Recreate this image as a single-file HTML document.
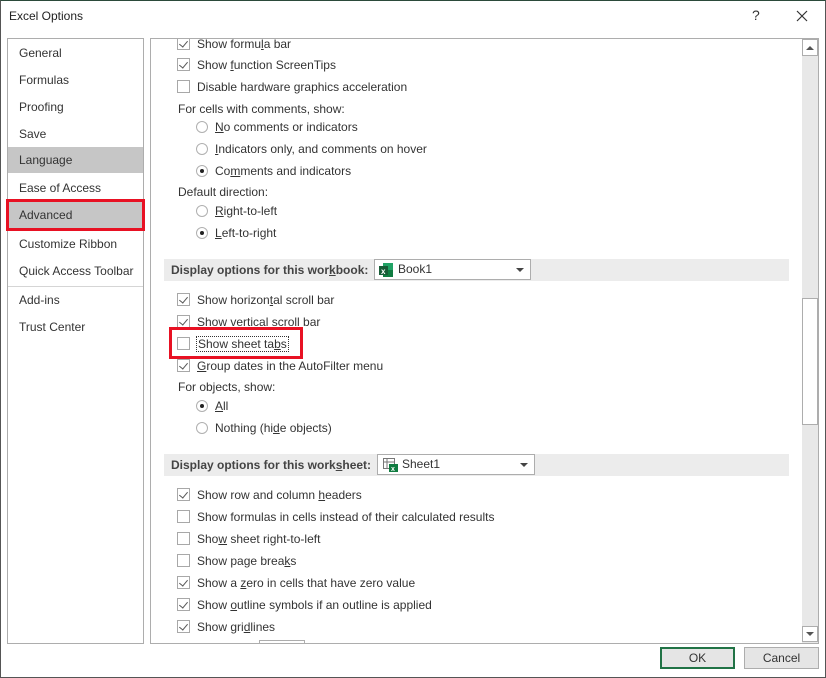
<!DOCTYPE html>
<html><head><meta charset="utf-8"><style>
*{margin:0;padding:0;box-sizing:border-box}
body{width:826px;height:678px;background:#fff;font-family:"Liberation Sans",sans-serif;font-size:12px;color:#333;position:relative;overflow:hidden}
.a{position:absolute;white-space:nowrap}
.win{position:absolute;left:0;top:0;width:826px;height:678px;border:1px solid #555;border-top-color:#2b4a3a}
.nav{position:absolute;left:7px;top:38px;width:137px;height:606px;border:1px solid #adadad}
.ni{position:absolute;left:0;width:135px;height:26px;line-height:26px;padding-left:11px;color:#333}
.main{position:absolute;left:150px;top:38px;width:669px;height:606px;border:1px solid #adadad;overflow:hidden}
.cb{position:absolute;width:13px;height:13px;border:1px solid #a8a8a8;background:#fff}
.cb.c::after{content:"";position:absolute;left:3px;top:1px;width:4px;height:7px;border-right:1px solid #555;border-bottom:1px solid #555;transform:rotate(40deg)}
.rb{position:absolute;width:12px;height:12px;border:1px solid #b0b0b0;border-radius:50%;background:#fff}
.rb.c::after{content:"";position:absolute;left:3px;top:3px;width:4px;height:4px;border-radius:50%;background:#222}
.t{position:absolute;white-space:nowrap;line-height:14px}
.hd{position:absolute;left:13px;width:625px;height:22px;background:#ececec;font-weight:bold;color:#444;line-height:22px;padding-left:7px}
.dd{position:absolute;height:21px;border:1px solid #adadad;background:#fff;line-height:19px;font-weight:normal;color:#333}
.dd .ar{position:absolute;right:6px;top:8px;border-left:4px solid transparent;border-right:4px solid transparent;border-top:4px solid #444}
.sb{position:absolute;left:651px;top:0;width:16px;height:604px;background:#e8e8e8}
.btn{position:absolute;top:647px;width:75px;height:22px;border:1px solid #adadad;background:#e5e5e5;text-align:center;line-height:20px;color:#333}
u{text-decoration:underline}
</style></head><body>
<div class="win"></div>
<div class="a" style="left:9px;top:9px;font-size:12px;color:#222">Excel Options</div>
<div class="a" style="left:752px;top:7px;font-size:14px;color:#333">?</div>
<svg class="a" style="left:796px;top:10px" width="12" height="12"><path d="M1 1L11 11M11 1L1 11" stroke="#333" stroke-width="1.2"/></svg>

<div class="nav">
<div class="ni" style="top:1px">General</div>
<div class="ni" style="top:28px">Formulas</div>
<div class="ni" style="top:55px">Proofing</div>
<div class="ni" style="top:82px">Save</div>
<div class="ni" style="top:108px;background:#c6c6c6">Language</div>
<div class="ni" style="top:136px">Ease of Access</div>
<div class="ni" style="top:163px;background:#c6c6c6">Advanced</div>
<div class="ni" style="top:192px">Customize Ribbon</div>
<div class="ni" style="top:219px">Quick Access Toolbar</div>
<div style="position:absolute;left:0;top:247px;width:135px;height:1px;background:#d5d5d5"></div>
<div class="ni" style="top:248px">Add-ins</div>
<div class="ni" style="top:275px">Trust Center</div>
</div>
<div class="a" style="left:6px;top:199px;width:139px;height:32px;border:3px solid #e81123"></div>

<div class="main">
<div class="cb c" style="left:26px;top:-2px"></div><div class="t" style="left:46px;top:-2px">Show formu<u>l</u>a bar</div>
<div class="cb c" style="left:26px;top:19px"></div><div class="t" style="left:46px;top:19px">Show <u>f</u>unction ScreenTips</div>
<div class="cb" style="left:26px;top:41px"></div><div class="t" style="left:46px;top:41px">Disable hardware <u>g</u>raphics acceleration</div>
<div class="t" style="left:27px;top:63px">For cells with comments, show:</div>
<div class="rb" style="left:45px;top:82px"></div><div class="t" style="left:64px;top:81px"><u>N</u>o comments or indicators</div>
<div class="rb" style="left:45px;top:104px"></div><div class="t" style="left:64px;top:103px"><u>I</u>ndicators only, and comments on hover</div>
<div class="rb c" style="left:45px;top:126px"></div><div class="t" style="left:64px;top:125px">Co<u>m</u>ments and indicators</div>
<div class="t" style="left:27px;top:146px">Default direction:</div>
<div class="rb" style="left:45px;top:166px"></div><div class="t" style="left:64px;top:165px"><u>R</u>ight-to-left</div>
<div class="rb c" style="left:45px;top:188px"></div><div class="t" style="left:64px;top:187px"><u>L</u>eft-to-right</div>

<div class="hd" style="top:220px">Display options for this wor<u>k</u>book:
<div class="dd" style="left:210px;top:0;width:157px"><svg style="position:absolute;left:4px;top:3px" width="14" height="14"><rect x="4" y="0" width="10" height="14" fill="#21a366"/><rect x="4" y="7" width="10" height="7" fill="#107c41"/><rect x="0" y="3" width="9" height="9" fill="#185c37"/><text x="2" y="11" font-size="8" fill="#fff" font-family="Liberation Sans" font-weight="bold">x</text></svg><span style="position:absolute;left:23px">Book1</span><div class="ar"></div></div></div>

<div class="cb c" style="left:26px;top:254px"></div><div class="t" style="left:46px;top:254px">Show horizon<u>t</u>al scroll bar</div>
<div class="cb c" style="left:26px;top:276px"></div><div class="t" style="left:46px;top:276px">Show <u>v</u>ertical scroll bar</div>
<div class="cb" style="left:26px;top:298px"></div><div class="t" style="left:45px;top:297px;border:1px dotted #333;padding:0 1px">Show sheet ta<u>b</u>s</div>
<div class="cb c" style="left:26px;top:320px"></div><div class="t" style="left:46px;top:320px"><u>G</u>roup dates in the AutoFilter menu</div>
<div class="t" style="left:27px;top:341px">For objects, show:</div>
<div class="rb c" style="left:45px;top:361px"></div><div class="t" style="left:64px;top:360px"><u>A</u>ll</div>
<div class="rb" style="left:45px;top:383px"></div><div class="t" style="left:64px;top:382px">Nothing (hi<u>d</u>e objects)</div>

<div class="hd" style="top:415px">Display options for this work<u>s</u>heet:
<div class="dd" style="left:213px;top:0;width:158px"><svg style="position:absolute;left:5px;top:3px" width="15" height="14"><rect x="0.5" y="0.5" width="11" height="10" fill="none" stroke="#777"/><path d="M0 4H12M4 0V11" stroke="#777"/><rect x="6" y="6" width="9" height="8" fill="#107c41"/><text x="8" y="13" font-size="7" fill="#fff" font-family="Liberation Sans" font-weight="bold">x</text></svg><span style="position:absolute;left:24px">Sheet1</span><div class="ar"></div></div></div>

<div class="cb c" style="left:26px;top:449px"></div><div class="t" style="left:46px;top:449px">Show row and column <u>h</u>eaders</div>
<div class="cb" style="left:26px;top:471px"></div><div class="t" style="left:46px;top:471px">Show formulas in cells instead of their calculated results</div>
<div class="cb" style="left:26px;top:493px"></div><div class="t" style="left:46px;top:493px">Sho<u>w</u> sheet right-to-left</div>
<div class="cb" style="left:26px;top:515px"></div><div class="t" style="left:46px;top:515px">Show page brea<u>k</u>s</div>
<div class="cb c" style="left:26px;top:537px"></div><div class="t" style="left:46px;top:537px">Show a <u>z</u>ero in cells that have zero value</div>
<div class="cb c" style="left:26px;top:559px"></div><div class="t" style="left:46px;top:559px">Show <u>o</u>utline symbols if an outline is applied</div>
<div class="cb c" style="left:26px;top:581px"></div><div class="t" style="left:46px;top:581px">Show gri<u>d</u>lines</div>
<div style="position:absolute;left:108px;top:601px;width:46px;height:10px;border:1px solid #adadad"></div>

<div class="sb">
<div style="position:absolute;left:0;top:0;width:16px;height:17px;border:1px solid #adadad;background:#fff"><div style="position:absolute;left:3px;top:6px;border-left:4px solid transparent;border-right:4px solid transparent;border-bottom:4px solid #555"></div></div>
<div style="position:absolute;left:0;top:259px;width:16px;height:127px;border:1px solid #adadad;background:#fff"></div>
<div style="position:absolute;left:0;top:587px;width:16px;height:16px;border:1px solid #adadad;background:#fff"><div style="position:absolute;left:3px;top:5px;border-left:4px solid transparent;border-right:4px solid transparent;border-top:4px solid #555"></div></div>
</div>
</div>
<div class="a" style="left:169px;top:327px;width:134px;height:32px;border:3px solid #e81123"></div>

<div class="btn" style="left:660px;border:2px solid #217346;line-height:18px">OK</div>
<div class="btn" style="left:744px">Cancel</div>
</body></html>
